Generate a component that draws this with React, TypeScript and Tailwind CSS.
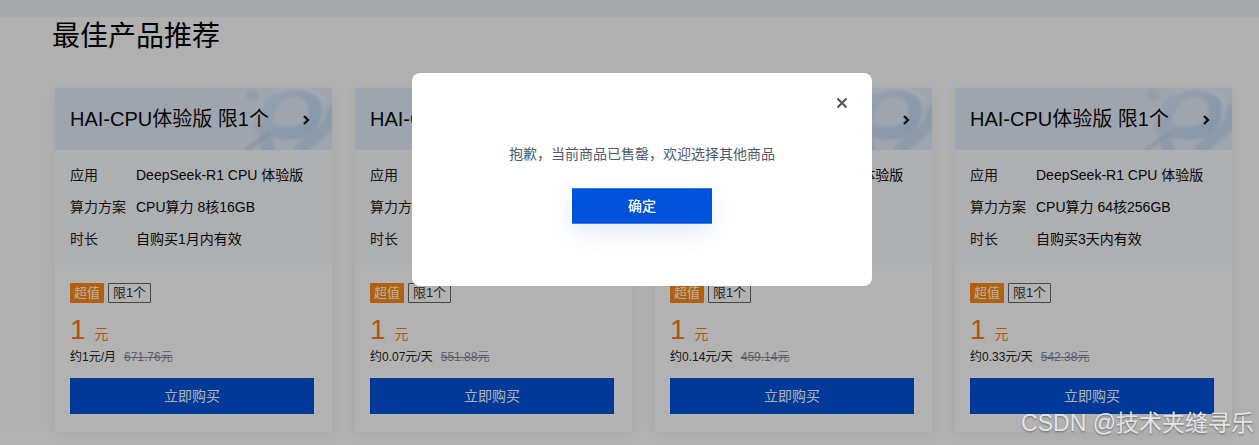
import React from "react";

const FONT = { fontFamily: '"Liberation Sans", "Noto Sans CJK SC", sans-serif' };

type Card = {
  compute: string;
  duration: string;
  unit: string;
  orig: string;
};

const cards: Card[] = [
  { compute: "CPU算力 8核16GB", duration: "自购买1月内有效", unit: "约1元/月", orig: "671.76元" },
  { compute: "CPU算力 16核32GB", duration: "自购买15天内有效", unit: "约0.07元/天", orig: "551.88元" },
  { compute: "CPU算力 32核64GB", duration: "自购买7天内有效", unit: "约0.14元/天", orig: "459.14元" },
  { compute: "CPU算力 64核256GB", duration: "自购买3天内有效", unit: "约0.33元/天", orig: "542.38元" },
];

function HeaderArt() {
  return (
    <svg className="absolute inset-0 h-full w-full" viewBox="0 0 278 62" preserveAspectRatio="none">
      <defs>
        <linearGradient id="hbg" x1="0" y1="0" x2="1" y2="0">
          <stop offset="0" stopColor="#e4edfa" />
          <stop offset="1" stopColor="#e2ecf9" />
        </linearGradient>
        <linearGradient id="rib" x1="0" y1="0" x2="1" y2="1">
          <stop offset="0" stopColor="#d8e8fa" />
          <stop offset="1" stopColor="#b4d2f2" />
        </linearGradient>
        <filter id="bl" x="-20%" y="-20%" width="140%" height="140%">
          <feGaussianBlur stdDeviation="1.6" />
        </filter>
      </defs>
      <rect width="278" height="62" fill="url(#hbg)" />
      <g filter="url(#bl)" fill="none" strokeLinecap="round">
        <path d="M214 62 C 206 40, 212 12, 232 4 C 252 -4, 268 16, 258 34 C 248 50, 222 46, 206 38" stroke="url(#rib)" strokeWidth="13" opacity="0.85" />
        <path d="M246 62 C 258 48, 280 42, 278 22" stroke="#c6ddf5" strokeWidth="12" opacity="0.85" />
        <path d="M222 4 C 238 -4, 260 0, 270 12" stroke="#eef5fd" strokeWidth="4" opacity="0.9" />
        <path d="M192 62 L 214 46" stroke="#c7ced8" strokeWidth="4" opacity="0.7" />
      </g>
      <polygon points="192,4 198,1 204,4 204,11 198,14 192,11" fill="#d0e0f4" opacity="0.8" filter="url(#bl)" />
    </svg>
  );
}

function ProductCard({ c }: { c: Card }) {
  return (
    <div className="flex w-[277px] shrink-0 flex-col bg-white shadow-[0_2px_14px_rgba(0,0,0,0.07)]">
      <div className="relative h-[62px] overflow-hidden">
        <HeaderArt />
        <div className="relative flex h-full items-center justify-between pl-[15px] pr-[21px]">
          <span className="text-[20px] leading-7 text-[#0a0a0a]">HAI-CPU体验版 限1个</span>
          <svg width="9" height="12" viewBox="0 0 9 12" className="mt-[1px]">
            <path d="M2 2 L6 6 L2 10" fill="none" stroke="#111" strokeWidth="2.2" />
          </svg>
        </div>
      </div>
      <div className="flex flex-col bg-[#fafbfc] px-[15px] pb-[10px] pt-[9px] text-[14px] text-[#0a0a0a]">
        <div className="flex h-8 items-center">
          <span className="w-[66px] text-[#222]">应用</span>
          <span>DeepSeek-R1 CPU 体验版</span>
        </div>
        <div className="flex h-8 items-center">
          <span className="w-[66px] text-[#222]">算力方案</span>
          <span>{c.compute}</span>
        </div>
        <div className="flex h-8 items-center">
          <span className="w-[66px] text-[#222]">时长</span>
          <span>{c.duration}</span>
        </div>
      </div>
      <div className="flex flex-col px-[15px] pb-[18px] pt-[18px]">
        <div className="flex items-center gap-[4px]">
          <span className="flex h-5 w-[34px] items-center justify-center rounded-[1px] bg-[#ff8a10] text-[13px] text-white">超值</span>
          <span className="flex h-5 w-[43px] items-center justify-center rounded-[1px] border border-[#666] text-[13px] text-[#333]">限1个</span>
        </div>
        <div className="mt-[13px] flex h-7 items-end text-[#ff7a18]">
          <span className="text-[28px] leading-7">1</span>
          <span className="ml-[9px] text-[14px] leading-5">元</span>
        </div>
        <div className="mt-[4px] flex h-[18px] items-center text-[12px]">
          <span className="text-[#222]">{c.unit}</span>
          <span className="ml-[8px] text-[#7f8a9c] line-through">{c.orig}</span>
        </div>
        <button className="mt-[12px] flex h-9 w-[244px] items-center justify-center bg-[#0052d9] text-[14px] text-white">
          立即购买
        </button>
      </div>
    </div>
  );
}

export default function App() {
  return (
    <div className="relative h-[445px] w-[1259px] overflow-hidden bg-white" style={FONT}>
      <div className="h-[17px] bg-[#f0f1f4]" />
      <div className="bg-[#fdfdfd]">
        <h1 className="pl-[52px] text-[28px] leading-[40px] text-[#000]">最佳产品推荐</h1>
        <div className="ml-[55px] mt-[31px] flex gap-[23px]">
          {cards.map((c, i) => (
            <ProductCard key={i} c={c} />
          ))}
        </div>
      </div>

      <div className="absolute inset-0 bg-black/30" />

      <div className="absolute left-[412px] top-[73px] flex h-[213px] w-[460px] flex-col items-center rounded-lg bg-white pt-[70px]">
        <button className="absolute right-[23px] top-[23px] flex h-[14px] w-[14px] items-center justify-center">
          <svg width="12" height="12" viewBox="0 0 12 12">
            <path d="M1.5 1.5 L10.5 10.5 M10.5 1.5 L1.5 10.5" stroke="#555" strokeWidth="2" />
          </svg>
        </button>
        <p className="text-[14px] leading-[22px] text-[#4f5a6e]">抱歉，当前商品已售罄，欢迎选择其他商品</p>
        <button className="mt-[23px] flex h-9 w-[140px] items-center justify-center border-y border-[#3b7de8] bg-[#0052d9] text-[14px] font-medium text-white shadow-[0_8px_24px_rgba(0,82,217,0.12)]">
          确定
        </button>
      </div>

      <div className="absolute bottom-[6px] right-[5px] text-[23px] leading-8 text-[#e4e4e4] [text-shadow:0_1px_2px_rgba(0,0,0,0.4)]">
        CSDN @技术夹缝寻乐
      </div>
    </div>
  );
}
